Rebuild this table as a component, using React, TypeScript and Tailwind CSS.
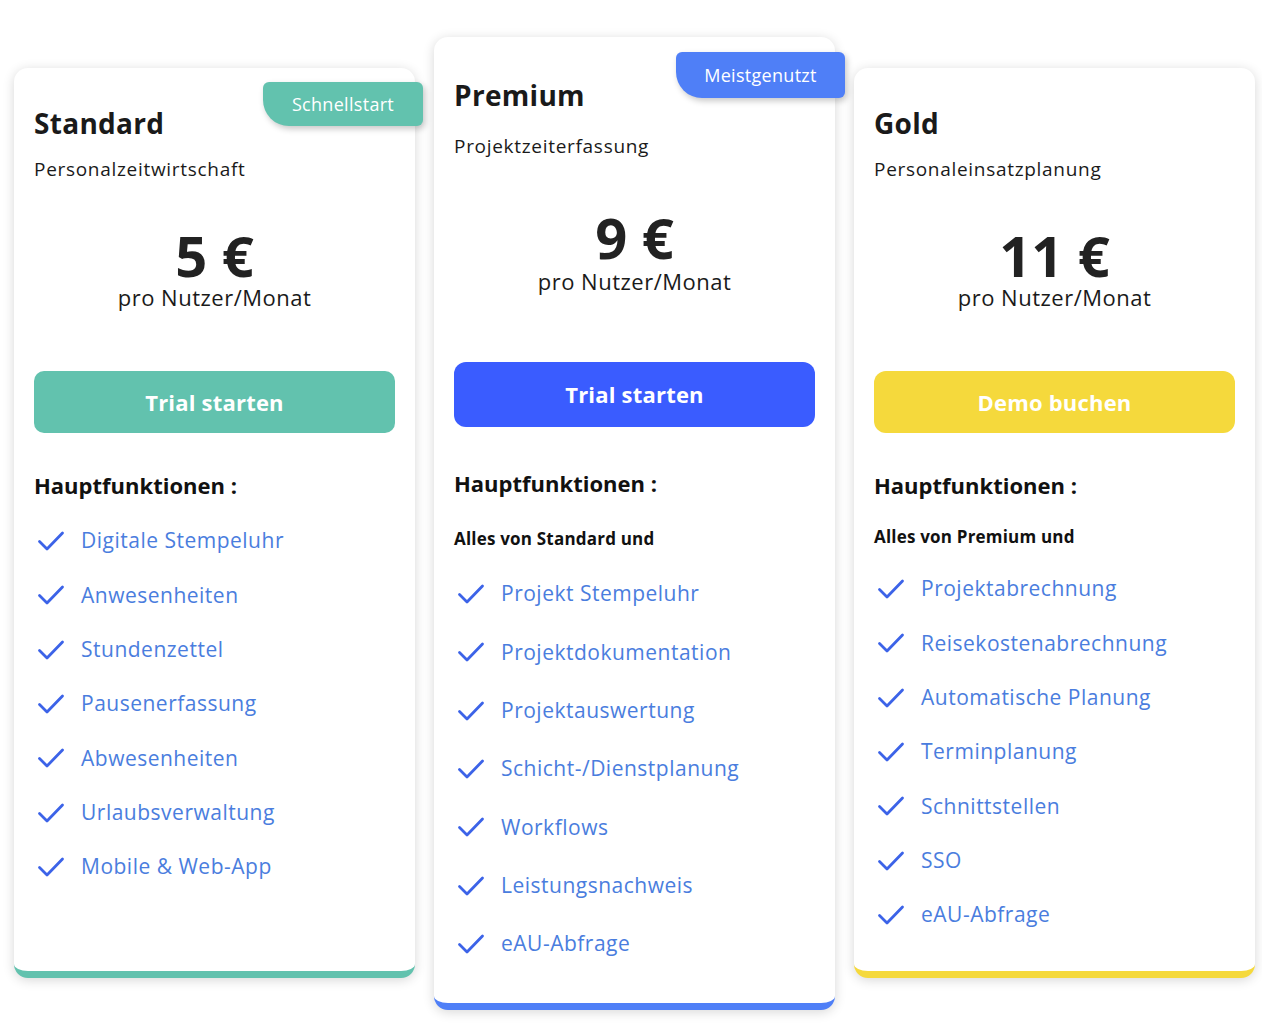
type Plan = {
  name: string;
  subtitle: string;
  price: string;
  cta: string;
  badge?: string;
  intro?: string;
  features: string[];
};

const plans: Plan[] = [
  {
    name: 'Standard',
    subtitle: 'Personalzeitwirtschaft',
    price: '5 €',
    cta: 'Trial starten',
    badge: 'Schnellstart',
    features: [
      'Digitale Stempeluhr',
      'Anwesenheiten',
      'Stundenzettel',
      'Pausenerfassung',
      'Abwesenheiten',
      'Urlaubsverwaltung',
      'Mobile & Web-App',
    ],
  },
  {
    name: 'Premium',
    subtitle: 'Projektzeiterfassung',
    price: '9 €',
    cta: 'Trial starten',
    badge: 'Meistgenutzt',
    intro: 'Alles von Standard und',
    features: [
      'Projekt Stempeluhr',
      'Projektdokumentation',
      'Projektauswertung',
      'Schicht-/Dienstplanung',
      'Workflows',
      'Leistungsnachweis',
      'eAU-Abfrage',
    ],
  },
  {
    name: 'Gold',
    subtitle: 'Personaleinsatzplanung',
    price: '11 €',
    cta: 'Demo buchen',
    intro: 'Alles von Premium und',
    features: [
      'Projektabrechnung',
      'Reisekostenabrechnung',
      'Automatische Planung',
      'Terminplanung',
      'Schnittstellen',
      'SSO',
      'eAU-Abfrage',
    ],
  },
];

function Check() {
  return (
    <svg className="w-[28px] h-[22px] shrink-0" viewBox="0 0 28 22" fill="none">
      <path
        d="M2.5 11.5 L10 19 L25.5 3"
        stroke="#3c63e8"
        strokeWidth={2.8}
        strokeLinecap="round"
        strokeLinejoin="round"
      />
    </svg>
  );
}

function StandardCard({ plan }: { plan: Plan }) {
  return (
    <div className="relative mt-[31px] w-[401px] h-[910px] shrink-0 bg-white rounded-[14px] border-b-[7px] border-[#62c2ae] shadow-[0_2px_12px_rgba(0,0,0,0.16)] px-[20px] pt-[37px]">
      <div className="absolute top-[14px] right-[-8px] w-[160px] h-[44px] bg-[#62c2ae] rounded-tl-[6px] rounded-bl-[26px] rounded-r-[6px] shadow-[2px_3px_6px_rgba(0,0,0,0.22)] flex items-center justify-center text-white text-[18px] tracking-[0.3px]">
        {plan.badge}
      </div>
      <h2 className="text-[28px] leading-[36px] font-bold tracking-[0.3px] text-[#1a1a1a]">{plan.name}</h2>
      <p className="mt-[14px] text-[19px] leading-[28px] tracking-[0.7px] text-[#1a1a1a]">{plan.subtitle}</p>
      <div className="mt-[44px] text-center text-[56px] leading-[56px] font-bold text-[#222]">{plan.price}</div>
      <div className="text-center text-[22px] leading-[28px] tracking-[0.5px] text-[#1a1a1a]">pro Nutzer/Monat</div>
      <button className="mt-[60px] w-full h-[62px] rounded-[10px] bg-[#62c2ae] text-white text-[22px] font-bold tracking-[0.2px]">
        {plan.cta}
      </button>
      <h3 className="mt-[37px] text-[22px] leading-[30px] font-bold text-[#111]">Hauptfunktionen :</h3>
      <ul className="mt-[14px]">
        {plan.features.map((f) => (
          <li key={f} className="h-[54.3px] flex items-center gap-[16px] pl-[3px] text-[21px] tracking-[0.5px] text-[#4a7dde]">
            <Check />
            {f}
          </li>
        ))}
      </ul>
    </div>
  );
}

function PremiumCard({ plan }: { plan: Plan }) {
  return (
    <div className="relative w-[401px] h-[973px] shrink-0 bg-white rounded-[14px] border-b-[7px] border-[#4f7ff7] shadow-[0_2px_12px_rgba(0,0,0,0.16)] px-[20px] pt-[40px]">
      <div className="absolute top-[15px] right-[-10px] w-[169px] h-[46px] bg-[#4f7ff7] rounded-tl-[6px] rounded-bl-[26px] rounded-r-[6px] shadow-[2px_3px_6px_rgba(0,0,0,0.22)] flex items-center justify-center text-white text-[18px] tracking-[0.3px]">
        {plan.badge}
      </div>
      <h2 className="text-[28px] leading-[36px] font-bold tracking-[0.3px] text-[#1a1a1a]">{plan.name}</h2>
      <p className="mt-[19px] text-[19px] leading-[28px] tracking-[0.7px] text-[#1a1a1a]">{plan.subtitle}</p>
      <div className="mt-[49px] text-center text-[56px] leading-[56px] font-bold text-[#222]">{plan.price}</div>
      <div className="mt-[2px] text-center text-[22px] leading-[28px] tracking-[0.5px] text-[#1a1a1a]">pro Nutzer/Monat</div>
      <button className="mt-[67px] w-full h-[65px] rounded-[12px] bg-[#3a5cff] text-white text-[22px] font-bold tracking-[0.2px]">
        {plan.cta}
      </button>
      <h3 className="mt-[41px] text-[22px] leading-[30px] font-bold text-[#111]">Hauptfunktionen :</h3>
      <p className="mt-[29px] text-[17px] leading-[24px] font-bold tracking-[0.2px] text-[#111]">{plan.intro}</p>
      <ul className="mt-[14px]">
        {plan.features.map((f) => (
          <li key={f} className="h-[58.3px] flex items-center gap-[16px] pl-[3px] text-[21px] tracking-[0.5px] text-[#4a7dde]">
            <Check />
            {f}
          </li>
        ))}
      </ul>
    </div>
  );
}

function GoldCard({ plan }: { plan: Plan }) {
  return (
    <div className="relative mt-[31px] w-[401px] h-[910px] shrink-0 bg-white rounded-[14px] border-b-[7px] border-[#f5d93c] shadow-[0_2px_12px_rgba(0,0,0,0.16)] px-[20px] pt-[37px]">
      <h2 className="text-[28px] leading-[36px] font-bold tracking-[0.3px] text-[#1a1a1a]">{plan.name}</h2>
      <p className="mt-[14px] text-[19px] leading-[28px] tracking-[0.7px] text-[#1a1a1a]">{plan.subtitle}</p>
      <div className="mt-[44px] text-center text-[56px] leading-[56px] font-bold text-[#222]">{plan.price}</div>
      <div className="text-center text-[22px] leading-[28px] tracking-[0.5px] text-[#1a1a1a]">pro Nutzer/Monat</div>
      <button className="mt-[60px] w-full h-[62px] rounded-[12px] bg-[#f5d93c] text-white text-[22px] font-bold tracking-[0.2px]">
        {plan.cta}
      </button>
      <h3 className="mt-[37px] text-[22px] leading-[30px] font-bold text-[#111]">Hauptfunktionen :</h3>
      <p className="mt-[25px] text-[17px] leading-[24px] font-bold tracking-[0.2px] text-[#111]">{plan.intro}</p>
      <ul className="mt-[13px]">
        {plan.features.map((f) => (
          <li key={f} className="h-[54.3px] flex items-center gap-[16px] pl-[3px] text-[21px] tracking-[0.5px] text-[#4a7dde]">
            <Check />
            {f}
          </li>
        ))}
      </ul>
    </div>
  );
}

export default function App() {
  return (
    <div className="w-[1262px] h-[1025px] bg-white overflow-hidden font-['Open_Sans',sans-serif]">
      <div className="flex items-start gap-[19px] pl-[14px] pt-[37px]">
        <StandardCard plan={plans[0]} />
        <PremiumCard plan={plans[1]} />
        <GoldCard plan={plans[2]} />
      </div>
    </div>
  );
}
